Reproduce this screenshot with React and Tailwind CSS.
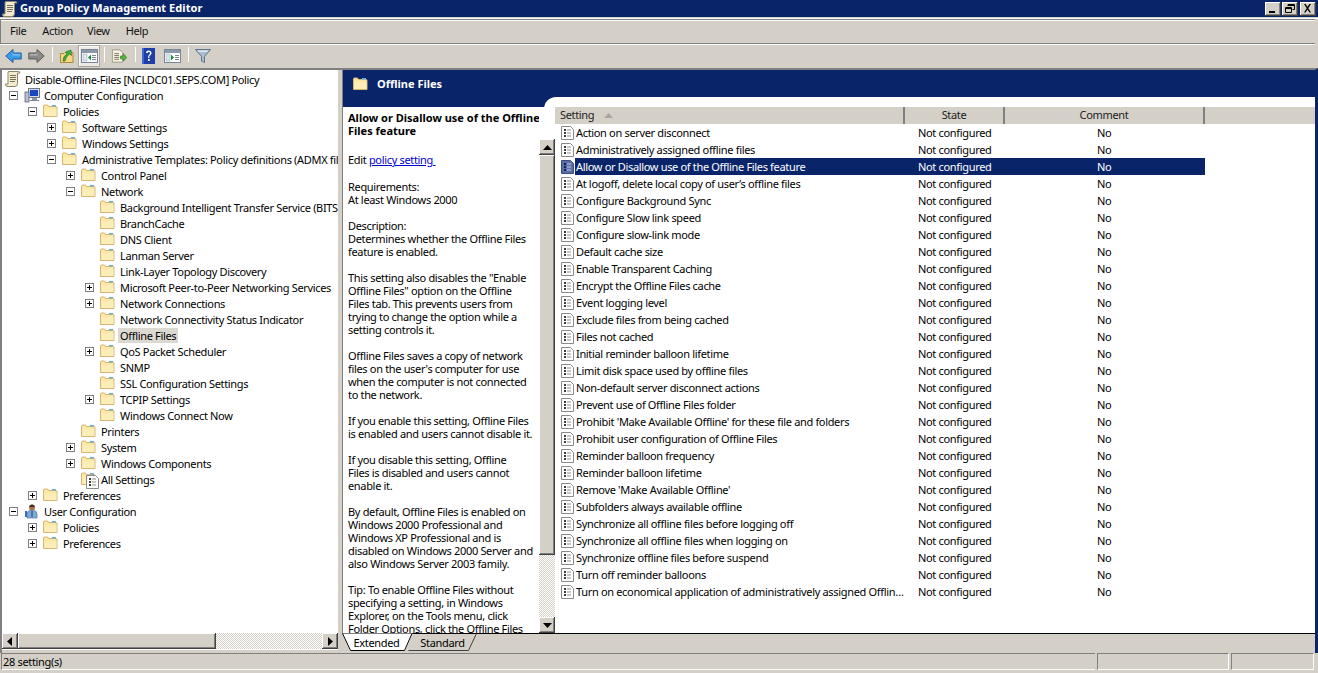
import React from 'react';

const tree = [
  [0, null, 'doc', 'Disable-Offline-Files [NCLDC01.SEPS.COM] Policy'],
  [0, '-', 'pc', 'Computer Configuration'],
  [1, '-', 'f', 'Policies'],
  [2, '+', 'f', 'Software Settings'],
  [2, '+', 'f', 'Windows Settings'],
  [2, '-', 'f', 'Administrative Templates: Policy definitions (ADMX files) retrieved'],
  [3, '+', 'f', 'Control Panel'],
  [3, '-', 'f', 'Network'],
  [4, null, 'f', 'Background Intelligent Transfer Service (BITS)'],
  [4, null, 'f', 'BranchCache'],
  [4, null, 'f', 'DNS Client'],
  [4, null, 'f', 'Lanman Server'],
  [4, null, 'f', 'Link-Layer Topology Discovery'],
  [4, '+', 'f', 'Microsoft Peer-to-Peer Networking Services'],
  [4, '+', 'f', 'Network Connections'],
  [4, null, 'f', 'Network Connectivity Status Indicator'],
  [4, null, 'f', 'Offline Files', true],
  [4, '+', 'f', 'QoS Packet Scheduler'],
  [4, null, 'f', 'SNMP'],
  [4, null, 'f', 'SSL Configuration Settings'],
  [4, '+', 'f', 'TCPIP Settings'],
  [4, null, 'f', 'Windows Connect Now'],
  [3, null, 'f', 'Printers'],
  [3, '+', 'f', 'System'],
  [3, '+', 'f', 'Windows Components'],
  [3, null, 's', 'All Settings'],
  [1, '+', 'f', 'Preferences'],
  [0, '-', 'user', 'User Configuration'],
  [1, '+', 'f', 'Policies'],
  [1, '+', 'f', 'Preferences'],
];

const settings = [
  'Action on server disconnect',
  'Administratively assigned offline files',
  'Allow or Disallow use of the Offline Files feature',
  "At logoff, delete local copy of user\u2019s offline files",
  'Configure Background Sync',
  'Configure Slow link speed',
  'Configure slow-link mode',
  'Default cache size',
  'Enable Transparent Caching',
  'Encrypt the Offline Files cache',
  'Event logging level',
  'Exclude files from being cached',
  'Files not cached',
  'Initial reminder balloon lifetime',
  'Limit disk space used by offline files',
  'Non-default server disconnect actions',
  'Prevent use of Offline Files folder',
  "Prohibit 'Make Available Offline' for these file and folders",
  'Prohibit user configuration of Offline Files',
  'Reminder balloon frequency',
  'Reminder balloon lifetime',
  "Remove 'Make Available Offline'",
  'Subfolders always available offline',
  'Synchronize all offline files before logging off',
  'Synchronize all offline files when logging on',
  'Synchronize offline files before suspend',
  'Turn off reminder balloons',
  'Turn on economical application of administratively assigned Offline Files',
];

const raised = 'bg-[#d4d0c8] shadow-[inset_-1px_-1px_#404040,inset_1px_1px_#ffffff,inset_-2px_-2px_#808080]';
const hatch = 'bg-[repeating-conic-gradient(#d4d0c8_0_25%,#ffffff_0_50%)] bg-[length:2px_2px]';

function Folder({ className = '' }) {
  return (
    <svg width="16" height="14" viewBox="0 0 16 14" className={className}>
      <path d="M.5 12.500V2q0-1 1-1h3l1 1.500h7.500q1 0 1 1v9z" fill="#fbe6a2" stroke="#d3b574" />
      <path d="M1.500 12V5h12v7z" fill="#fdedb6" />
      <rect x="9" y="1" width="4" height="1.500" fill="#6aaee0" />
    </svg>
  );
}

function Sheet({ selected }) {
  return (
    <svg width="13" height="14" viewBox="0 0 13 14" className="shrink-0">
      <path d="M.5.500h9l3 3v10H.5z" fill={selected ? '#5b6ea3' : '#ffffff'} stroke={selected ? '#3a4c86' : '#8a8a8a'} />
      <g fill={selected ? '#0a246a' : '#3c3c3c'}>
        <rect x="3" y="3" width="2" height="2" />
        <rect x="3" y="6" width="2" height="2" />
        <rect x="3" y="9" width="2" height="2" />
      </g>
      <g fill={selected ? '#c6cde0' : '#8d8d8d'}>
        <rect x="6" y="3.500" width="4" height="1" />
        <rect x="6" y="6.500" width="4" height="1" />
        <rect x="6" y="9.500" width="4" height="1" />
      </g>
    </svg>
  );
}

function TreeIcon({ kind }) {
  if (kind === 'f') return <Folder className="shrink-0" />;
  if (kind === 's')
    return (
      <span className="relative w-[16px] h-[14px] shrink-0">
        <Folder />
        <span className="absolute left-[5px] top-[3px]">
          <Sheet />
        </span>
      </span>
    );
  if (kind === 'doc')
    return (
      <svg width="16" height="16" viewBox="0 0 16 16" className="shrink-0">
        <path d="M3.500.500h10q1.500 0 1.500 1.500h-2.500v10.500q0 3-2.500 3H2q-1.500 0-1.500-2.500h2.500V2q0-1 .5-1.500z" fill="#f3ead0" stroke="#8c8468" />
        <g stroke="#77705a"><path d="M5 4.500h6M5 6.500h6M5 8.500h6M5 10.500h5" /></g>
      </svg>
    );
  if (kind === 'pc')
    return (
      <svg width="16" height="16" viewBox="0 0 16 16" className="shrink-0">
        <rect x="4.500" y="1.500" width="11" height="9" fill="#d8dce6" stroke="#6f7685" />
        <rect x="6" y="3" width="8" height="6" fill="#1746c0" />
        <rect x="8" y="11" width="5" height="2" fill="#8f97a8" />
        <rect x="1" y="5" width="4" height="10" fill="#b7bfd0" stroke="#5b6375" strokeWidth=".8" />
        <rect x="6" y="13" width="9" height="1" fill="#7d8493" />
      </svg>
    );
  return (
    <svg width="16" height="16" viewBox="0 0 16 16" className="shrink-0">
      <circle cx="8" cy="4.500" r="3" fill="#a8744c" />
      <path d="M5.500 3q2.500-3 5 0v1h-5z" fill="#3a2c24" />
      <path d="M3 15v-4q0-3 3-3.500h4q3 .5 3 3.500v4z" fill="#7fa9d8" stroke="#4b74a8" strokeWidth=".7" />
      <path d="M7.500 8h1v6h-1z" fill="#263f6b" />
      <rect x="1" y="8" width="2" height="6" fill="#3a6db2" />
    </svg>
  );
}

function Expander({ type }) {
  return (
    <span className="w-[9px] h-[9px] border border-[#808080] bg-white flex items-center justify-center relative shrink-0">
      <span className="w-[5px] h-px bg-black" />
      {type === '+' && <span className="absolute w-px h-[5px] bg-black" />}
    </span>
  );
}

const indentClass = ['pl-[7px]', 'pl-[26px]', 'pl-[45px]', 'pl-[64px]', 'pl-[83px]'];

function TreeRow({ level, exp, icon, label, sel }) {
  const isTop = level === 0 && !exp;
  return (
    <div className={`h-[16px] flex items-center whitespace-nowrap ${isTop ? 'pl-[3px]' : indentClass[level]}`}>
      {!isTop && <span className="w-[15px] shrink-0 flex items-center">{exp && <Expander type={exp} />}</span>}
      <span className="w-[16px] flex shrink-0">
        <TreeIcon kind={icon} />
      </span>
      <span className={`ml-[2px] px-[2px] leading-[15px] ${sel ? 'bg-[#dcd9d3]' : ''}`}>{label}</span>
    </div>
  );
}

function ScrollBtn({ dir, className = '' }) {
  const paths = { up: 'M4.500 2 0 7h9z', down: 'M0 2h9L4.500 7z', left: 'M6 0v9L1 4.500z', right: 'M2 0v9l5-4.500z' };
  return (
    <span className={`w-[16px] h-[16px] flex items-center justify-center shrink-0 ${raised} ${className}`}>
      <svg width="9" height="9" viewBox="0 0 9 9">
        <path d={paths[dir]} fill="#000" />
      </svg>
    </span>
  );
}

function Sep() {
  return <span className="w-[2px] h-[20px] mx-[3px] bg-[#808080] border-r border-white" />;
}

function ToolBtn({ children, pressed, className = '' }) {
  return (
    <span className={`h-[22px] flex items-center justify-center shrink-0 ${pressed ? 'bg-[#ece9e4] border border-[#a9a69f] shadow-[inset_1px_1px_#ffffff]' : ''} ${className}`}>
      {children}
    </span>
  );
}

function Pane({ arrow }) {
  return (
    <svg width="17" height="16" viewBox="0 0 17 16">
      <rect x=".5" y="1.500" width="16" height="13" fill="#ffffff" stroke="#7b8696" />
      <rect x="1" y="2" width="15" height="3" fill="#8b98ac" />
      <rect x="2" y="6" width="4" height="7" fill="#dbe4ef" stroke="#9aa6b8" strokeWidth=".5" />
      <g stroke="#7b8696"><path d="M11 7.500h4M11 9.500h4M11 11.500h4" /></g>
      <path d={arrow === 'left' ? 'M10 6.500v6l-3-3z' : 'M7 6.500v6l3-3z'} fill="#12903c" />
    </svg>
  );
}

function Arrow({ color, stroke, flip }) {
  return (
    <svg width="17" height="16" viewBox="0 0 17 16" className={flip ? '-scale-x-100' : ''}>
      <path d="M.8 8 8 1.500V5h8.200v6H8v3.500z" fill={color} stroke={stroke} />
      <path d="M8.800 6h6.500v1.500H7.500V4z" fill="#ffffff" opacity=".35" />
    </svg>
  );
}

function Toolbar() {
  return (
    <div className="h-[24px] flex items-center pl-[5px] border-t border-[#808080] shadow-[inset_0_1px_#ffffff] mr-[3px]">
      <ToolBtn className="w-[17px]"><Arrow color="#3c9be8" stroke="#1d5ca8" /></ToolBtn>
      <ToolBtn className="w-[17px] ml-[6px]"><Arrow color="#8a8a8a" stroke="#5a5a5a" flip /></ToolBtn>
      <span className="ml-[4px]"><Sep /></span>
      <ToolBtn className="w-[16px] ml-[3px]">
        <svg width="16" height="16" viewBox="0 0 16 16">
          <path d="M1.500 14.500v-9h3.500l1-1h8v10z" fill="#f5d67e" stroke="#a98a3c" />
          <path d="M4 13q0-5 4-7L6.500 4 12 2l.5 5.500L10.500 6Q7 8.500 6 13z" fill="#3fae3f" stroke="#1d6e1d" strokeWidth=".6" />
        </svg>
      </ToolBtn>
      <ToolBtn pressed className="w-[22px] ml-[3px]"><Pane arrow="left" /></ToolBtn>
      <span className="ml-[1px]"><Sep /></span>
      <ToolBtn className="w-[16px] ml-[3px]">
        <svg width="17" height="16" viewBox="0 0 17 16">
          <path d="M1.500 1.500h8l3 3v10h-11z" fill="#f7f4e6" stroke="#9d9a88" />
          <g stroke="#77705a"><path d="M3.500 5.500h5M3.500 7.500h5M3.500 9.500h5M3.500 11.500h5" /></g>
          <path d="M10 8h3V5.500L16.800 9.500 13 13.500V11h-3z" fill="#59b13e" stroke="#2d7a1a" strokeWidth=".7" />
        </svg>
      </ToolBtn>
      <span className="ml-[5px]"><Sep /></span>
      <ToolBtn className="w-[13px] ml-[3px]">
        <svg width="13" height="16" viewBox="0 0 13 16">
          <rect width="13" height="16" fill="#1f3fa8" />
          <rect x="0" y="0" width="2" height="16" fill="#3f66cf" />
          <path d="M4 5q0-2.500 2.700-2.500T9.500 5q0 1.500-1.500 2.500T7.500 10h-1.500q0-2 1-3t1-2q0-1-1-1T5.500 5zM6 11h1.700v2H6z" fill="#ffffff" />
        </svg>
      </ToolBtn>
      <ToolBtn className="w-[17px] ml-[9px]"><Pane arrow="right" /></ToolBtn>
      <span className="ml-[4px]"><Sep /></span>
      <ToolBtn className="w-[16px] ml-[3px]">
        <svg width="16" height="16" viewBox="0 0 16 16">
          <path d="M.500 1.500h15L9.500 8.500v6l-3-1.500V8.500z" fill="#a9bdd0" stroke="#60758c" />
          <path d="M2.500 2.500h11L12 4H4z" fill="#dfe8f0" />
        </svg>
      </ToolBtn>
    </div>
  );
}

function Desc() {
  const P = ({ children, className = 'mb-[13px]' }) => <p className={className}>{children}</p>;
  return (
    <div className="w-[197px] pl-[5px] pt-[4px] h-full overflow-hidden leading-[13px] whitespace-nowrap">
      <p className="font-bold tracking-normal mb-[16px]">Allow or Disallow use of the Offline<br />Files feature</p>
      <p className="mb-[14px]">Edit <span className="text-[#0000cc] underline">policy setting&nbsp;</span></p>
      <P>Requirements:<br />At least Windows 2000</P>
      <P>Description:<br />Determines whether the Offline Files<br />feature is enabled.</P>
      <P>This setting also disables the "Enable<br />Offline Files" option on the Offline<br />Files tab. This prevents users from<br />trying to change the option while a<br />setting controls it.</P>
      <P>Offline Files saves a copy of network<br />files on the user's computer for use<br />when the computer is not connected<br />to the network.</P>
      <P>If you enable this setting, Offline Files<br />is enabled and users cannot disable it.</P>
      <P>If you disable this setting, Offline<br />Files is disabled and users cannot<br />enable it.</P>
      <P>By default, Offline Files is enabled on<br />Windows 2000 Professional and<br />Windows XP Professional and is<br />disabled on Windows 2000 Server and<br />also Windows Server 2003 family.</P>
      <P>Tip: To enable Offline Files without<br />specifying a setting, in Windows<br />Explorer, on the Tools menu, click<br />Folder Options, click the Offline Files</P>
    </div>
  );
}

function SettingsList() {
  return (
    <div className="flex-1 min-w-0 flex flex-col overflow-hidden">
      <div className="h-[17px] grid grid-cols-[350px_100px_200px_1fr] bg-[#d4d0c8] shrink-0 text-[#222]">
        <span className="border-r-2 border-[#808080] pl-[5px] flex items-center">
          Setting
          <svg width="9" height="6" viewBox="0 0 9 6" className="ml-[10px]"><path d="M4.500 0 9 5H0z" fill="#a8a59e" /></svg>
        </span>
        <span className="border-r-2 border-[#808080] text-center">State</span>
        <span className="border-r-2 border-[#808080] text-center">Comment</span>
        <span />
      </div>
      <div>
        {settings.map((s, i) => {
          const sel = i === 2;
          return (
            <div key={s} className="h-[17px] w-[650px] grid grid-cols-[350px_100px_200px] items-center">
              <span className="flex items-center pl-[6px] min-w-0">
                <Sheet selected={sel} />
                <span className={`ml-[1px] pl-[1px] leading-[17px] flex-1 min-w-0 truncate ${sel ? 'bg-[#0a246a] text-white' : ''}`}>{s}</span>
              </span>
              <span className={`pl-[13px] leading-[17px] ${sel ? 'bg-[#0a246a] text-white' : ''}`}>Not configured</span>
              <span className={`pl-[92px] leading-[17px] ${sel ? 'bg-[#0a246a] text-white' : ''}`}>No</span>
            </div>
          );
        })}
      </div>
    </div>
  );
}

function Tab({ label, active, className = '' }) {
  return (
    <span className={`relative w-[71px] h-[19px] -mt-px shrink-0 flex items-center justify-center pr-[2px] leading-[16px] ${className}`}>
      <svg width="71" height="19" viewBox="0 0 71 19" className="absolute inset-0">
        {active ? (
          <>
            <path d="M0 .500 8 18H63L70.500 .500z" fill="#ffffff" />
            <path d="M.5 .500 8.500 17.500H62.500L70 .500" fill="none" stroke="#000" />
          </>
        ) : (
          <path d="M.5 17.500H60.500L68.500 .500" fill="none" stroke="#404040" />
        )}
      </svg>
      <span className="relative">{label}</span>
    </span>
  );
}

export default function App() {
  return (
    <div className="w-[1318px] h-[673px] overflow-hidden bg-[#d4d0c8] text-[11px] tracking-[-0.33px] text-black flex flex-col font-['Noto_Sans','DejaVu_Sans',sans-serif]">
      <div className="h-[17px] shrink-0 bg-[#0a246a] flex items-center text-white font-bold tracking-[0.05px] pl-[2px]">
        <span className="w-[15px] flex"><TreeIcon kind="doc" /></span>
        <span className="ml-[3px]">Group Policy Management Editor</span>
        <span className="ml-auto flex mr-[2px]">
          {['_', 'r', 'x'].map((k) => (
            <span key={k} className={`w-[16px] h-[14px] flex items-center justify-center ml-[1px] first:ml-0 last:ml-[2px] ${raised}`}>
              <svg width="10" height="9" viewBox="0 0 10 9">
                {k === '_' && <path d="M1 7h6v2H1z" fill="#000" />}
                {k === 'r' && <path d="M3 .500h6.500v5H7.500M3 1.500h6.500M3 .500V2M.500 3.500h6v5h-6zM.500 4.500h6" fill="none" stroke="#000" />}
                {k === 'x' && <path d="M1 0h1.500l2 2.800L6.500 0H8L5.300 4.200 8 8.500H6.500l-2-3-2 3H1l2.700-4.300z" fill="#000" />}
              </svg>
            </span>
          ))}
        </span>
      </div>
      <div className="flex-1 min-h-0 flex flex-col bg-[#d4d0c8] mt-[1px] border-t border-[#ffffff]">
        <div className="h-[24px] flex items-center pl-[9px] gap-[16px] border-t border-[#808080] shadow-[inset_0_1px_#ffffff] border-l mr-[3px] text-[#111]">
          <span>File</span>
          <span>Action</span>
          <span className="-ml-[2px]">View</span>
          <span>Help</span>
        </div>
        <Toolbar />
        <div className="flex-1 min-h-0 flex mt-[1px] border-t-2 border-[#808080] border-r-[3px] border-r-[#0a246a]">
          <div className="w-[338px] shrink-0 flex flex-col border-l-2 border-[#808080] bg-white">
            <div className="flex-1 min-h-0 overflow-hidden pt-[1px]">
              {tree.map(([level, exp, icon, label, sel], i) => (
                <TreeRow key={i} level={level} exp={exp} icon={icon} label={label} sel={sel} />
              ))}
            </div>
            <div className="h-[16px] shrink-0 flex bg-white">
              <ScrollBtn dir="left" />
              <span className={`flex-1 flex ${hatch}`}>
                <span className={`w-[198px] h-full ${raised}`} />
              </span>
              <ScrollBtn dir="right" />
            </div>
            <div className="h-[4px] shrink-0 bg-[#d4d0c8] border-t border-white" />
          </div>
          <div className="w-[4px] shrink-0 bg-[#d4d0c8]" />
          <div className="flex-1 min-w-0 flex flex-col">
            <div className="flex-1 min-h-0 flex flex-col bg-[#0a246a] border-l border-[#808080] relative">
              <div className="h-[27px] shrink-0 flex items-center pl-[10px] pt-[1px] text-white font-bold tracking-normal">
                <Folder />
                <span className="ml-[8px]">Offline Files</span>
              </div>
              <div className="flex-1 min-h-0 flex">
                <div className="w-[212px] shrink-0 flex flex-col pt-[10px]">
                  <div className="flex-1 min-h-0 flex relative bg-white">
                    <div className="flex-1 min-w-0 overflow-hidden"><Desc /></div>
                    <div className={`w-[16px] mt-[32px] flex flex-col ${hatch} shrink-0`}>
                      <ScrollBtn dir="up" />
                      <span className={`h-[400px] ${raised}`} />
                      <span className="flex-1" />
                      <ScrollBtn dir="down" />
                    </div>
                  </div>
                </div>
                <div className="flex-1 min-w-0 flex flex-col bg-white rounded-tl-[12px] -ml-[11px] pl-[11px] pt-[10px]">
                  <SettingsList />
                </div>
              </div>
            </div>
            <div className="h-[20px] shrink-0 flex items-start border-t border-black bg-[#d4d0c8]">
              <Tab label="Extended" active />
              <Tab label="Standard" className="-ml-[5px]" />
            </div>
          </div>
        </div>
        <div className="h-[20px] shrink-0 flex items-stretch pb-[3px] pr-[4px] pl-px">
          <span className="flex-1 pl-[1px] leading-[15px] border-t border-l border-[#808080] border-b border-b-white">28 setting(s)</span>
          <span className="w-[132px] border-t border-l border-[#808080] ml-[2px] border-r border-r-white border-b border-b-white" />
          <span className="w-[83px] border-t border-l border-[#808080] ml-[2px] border-r border-r-white border-b border-b-white" />
        </div>
      </div>
    </div>
  );
}
